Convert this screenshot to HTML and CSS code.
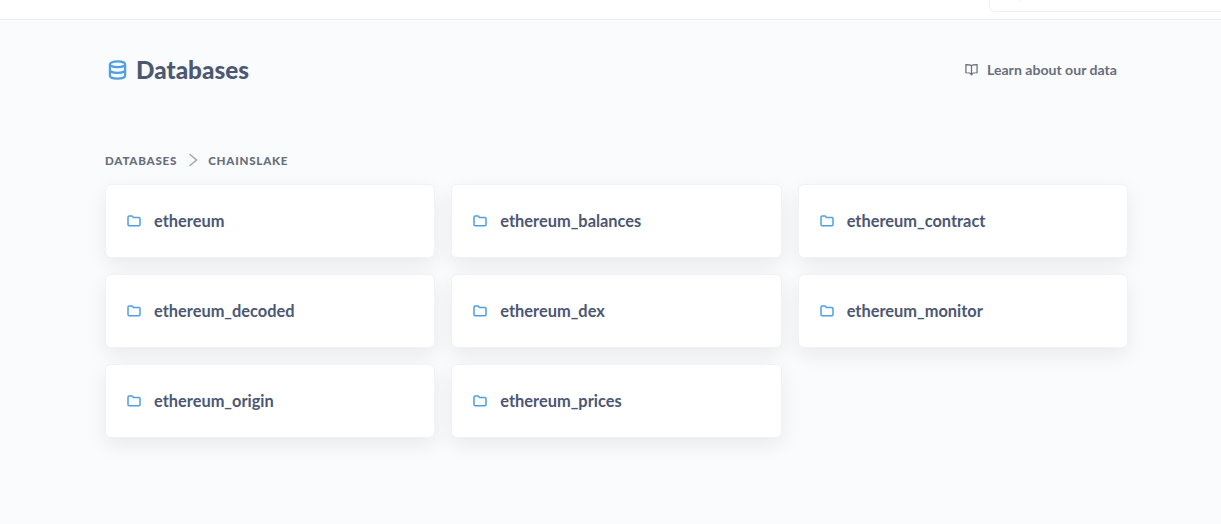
FILE: index.html
```html
<!DOCTYPE html>
<html lang="en">
<head>
  <meta charset="UTF-8">
  <title>Databases</title>
  <link rel="stylesheet" href="styles.css">
</head>
<body>
  <!-- Top bar, search box is cut off by the window -->
  <div class="top-bar">
    <div class="search-box">
      <svg class="search-icon" viewBox="0 0 16 16"><circle cx="7" cy="4" r="5"/><path d="M11 8l3 3"/></svg>
    </div>
  </div>

  <div class="page">
    <div class="page-head">
      <div class="title">
        <svg class="db-icon" viewBox="0 0 20 20">
          <ellipse cx="10" cy="4" rx="8" ry="3"/>
          <path d="M2 4v12c0 1.700 3.600 3 8 3s8-1.300 8-3V4"/>
          <path d="M2 10c0 1.700 3.600 3 8 3s8-1.300 8-3"/>
        </svg>
        <h1>Databases</h1>
      </div>
      <a class="learn-link">
        <svg class="book-icon" viewBox="0 0 14 14">
          <path d="M7 3C6 2 4 1.800 1 1.800v8.700c3 0 5 .2 6 1.200 1-1 3-1.200 6-1.200V1.800C10 1.800 8 2 7 3z"/>
          <path d="M7 3v8.700"/>
          <path d="M5.800 12.600h2.400"/>
        </svg>
        Learn about our data
      </a>
    </div>

    <div class="breadcrumbs">
      <span>Databases</span>
      <svg class="crumb-arrow" viewBox="0 0 10 14"><path d="M1.500 1l7 6-7 6"/></svg>
      <span>Chainslake</span>
    </div>

    <div class="schema-grid">
      <div class="card"><svg class="folder" viewBox="0 0 14 12"><path d="M1 2.200C1 1.500 1.500 1 2.200 1h2.900l1.400 1.500h5.300c.7 0 1.200.5 1.200 1.200v5.900c0 .7-.5 1.200-1.200 1.200H2.200c-.7 0-1.200-.5-1.200-1.200z"/></svg><span>ethereum</span></div>
      <div class="card"><svg class="folder" viewBox="0 0 14 12"><path d="M1 2.200C1 1.500 1.500 1 2.200 1h2.900l1.400 1.500h5.300c.7 0 1.200.5 1.200 1.200v5.900c0 .7-.5 1.200-1.200 1.200H2.200c-.7 0-1.200-.5-1.200-1.200z"/></svg><span>ethereum_balances</span></div>
      <div class="card"><svg class="folder" viewBox="0 0 14 12"><path d="M1 2.200C1 1.500 1.500 1 2.200 1h2.900l1.400 1.500h5.300c.7 0 1.200.5 1.200 1.200v5.900c0 .7-.5 1.200-1.200 1.200H2.200c-.7 0-1.200-.5-1.200-1.200z"/></svg><span>ethereum_contract</span></div>
      <div class="card"><svg class="folder" viewBox="0 0 14 12"><path d="M1 2.200C1 1.500 1.500 1 2.200 1h2.900l1.400 1.500h5.300c.7 0 1.200.5 1.200 1.200v5.900c0 .7-.5 1.200-1.200 1.200H2.200c-.7 0-1.200-.5-1.200-1.200z"/></svg><span>ethereum_decoded</span></div>
      <div class="card"><svg class="folder" viewBox="0 0 14 12"><path d="M1 2.200C1 1.500 1.500 1 2.200 1h2.900l1.400 1.500h5.300c.7 0 1.200.5 1.200 1.200v5.900c0 .7-.5 1.200-1.200 1.200H2.200c-.7 0-1.200-.5-1.200-1.200z"/></svg><span>ethereum_dex</span></div>
      <div class="card"><svg class="folder" viewBox="0 0 14 12"><path d="M1 2.200C1 1.500 1.500 1 2.200 1h2.900l1.400 1.500h5.300c.7 0 1.200.5 1.200 1.200v5.900c0 .7-.5 1.200-1.200 1.200H2.200c-.7 0-1.200-.5-1.200-1.200z"/></svg><span>ethereum_monitor</span></div>
      <div class="card"><svg class="folder" viewBox="0 0 14 12"><path d="M1 2.200C1 1.500 1.500 1 2.200 1h2.900l1.400 1.500h5.300c.7 0 1.200.5 1.200 1.200v5.900c0 .7-.5 1.200-1.200 1.200H2.200c-.7 0-1.200-.5-1.200-1.200z"/></svg><span>ethereum_origin</span></div>
      <div class="card"><svg class="folder" viewBox="0 0 14 12"><path d="M1 2.200C1 1.500 1.500 1 2.200 1h2.900l1.400 1.500h5.300c.7 0 1.200.5 1.200 1.200v5.900c0 .7-.5 1.200-1.200 1.200H2.200c-.7 0-1.200-.5-1.200-1.200z"/></svg><span>ethereum_prices</span></div>
    </div>
  </div>
</body>
</html>
```

FILE: styles.css
```css
html, body {
  margin: 0;
  padding: 0;
  height: 100%;
  overflow: hidden;
  font-family: "Lato", sans-serif;
  background-color: #f9fbfc;
  color: #4c5773;
}

.top-bar {
  height: 19px;
  background-color: white;
  border-bottom: 1px solid #eef0f2;
  display: flex;
  justify-content: flex-end;
  align-items: flex-end;
  overflow: hidden;
}

.search-box {
  width: 231px;
  height: 30px;
  margin-bottom: 7px;
  border: 1px solid #eef0f2;
  border-radius: 6px 0 0 6px;
  border-right: none;
  display: flex;
  align-items: flex-end;
}

.search-icon {
  width: 16px;
  height: 16px;
  margin-left: 16px;
  margin-bottom: 6px;
  fill: none;
  stroke: #949aab;
  stroke-width: 1.500;
}

.page {
  padding: 0 93px 0 105px;
}

.page-head {
  height: 101px;
  padding-top: 30px;
  padding-right: 11px;
  box-sizing: border-box;
  display: flex;
  justify-content: space-between;
  align-items: flex-start;
}

.title {
  display: flex;
  align-items: center;
  height: 40px;
  padding-left: 3px;
  gap: 9px;
}

.title h1 {
  margin: 0;
  font-size: 24.300px;
  font-weight: 900;
  line-height: 40px;
}

.db-icon {
  width: 19px;
  height: 20px;
  fill: none;
  stroke: #509ee3;
  stroke-width: 2.300;
}

.learn-link {
  display: flex;
  align-items: center;
  height: 38px;
  gap: 9px;
  font-size: 14.100px;
  font-weight: 700;
  color: #696e7b;
}

.book-icon {
  width: 13px;
  height: 13px;
  fill: none;
  stroke: #696e7b;
  stroke-width: 1.300;
}

.breadcrumbs {
  display: flex;
  align-items: center;
  height: 18px;
  margin-top: 30px;
  margin-bottom: 15px;
  gap: 11px;
  font-size: 11.620px;
  font-weight: 900;
  letter-spacing: 0.750px;
  text-transform: uppercase;
  color: #696e7b;
}

.crumb-arrow {
  width: 10px;
  height: 14px;
  margin-right: -1px;
  fill: none;
  stroke: #a5a9b5;
  stroke-width: 1.600;
}

.schema-grid {
  display: grid;
  grid-template-columns: repeat(3, 1fr);
  grid-auto-rows: 74px;
  gap: 16px;
}

.card {
  display: flex;
  align-items: center;
  padding-left: 21px;
  gap: 13px;
  background-color: white;
  border: 1px solid #f0f2f4;
  border-radius: 6px;
  box-shadow: 0 7px 20px rgba(0, 0, 0, 0.070);
  font-size: 16.400px;
  font-weight: 700;
}

.card span {
  margin-bottom: 2px;
}

.folder {
  width: 14px;
  height: 12px;
  flex-shrink: 0;
  fill: none;
  stroke: #509ee3;
  stroke-width: 1.500;
}
```
